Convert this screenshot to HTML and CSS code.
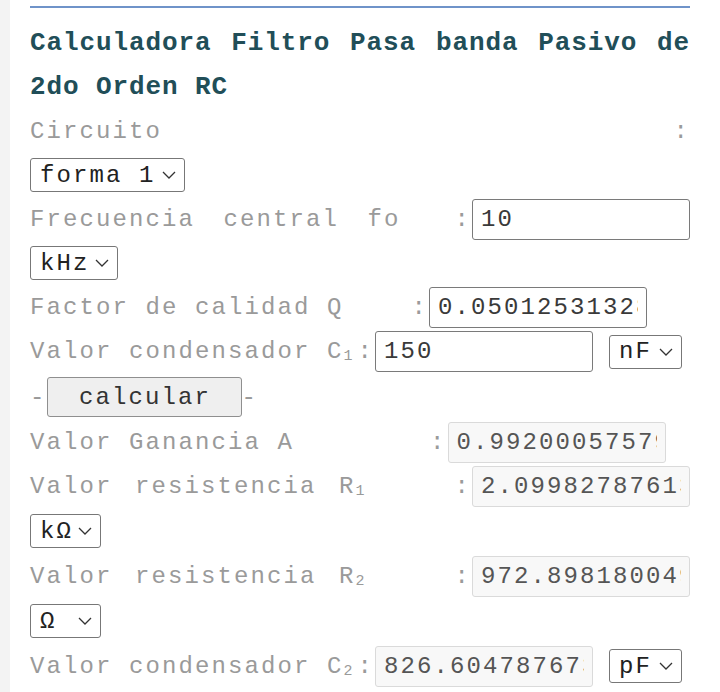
FILE: index.html
```html
<!DOCTYPE html>
<html lang="es">
<head>
<meta charset="utf-8">
<title>Calculadora Filtro Pasa banda Pasivo de 2do Orden RC</title>
<link rel="stylesheet" href="styles.css">
</head>
<body>
<div class="page">
  <form class="calc">
    <h1 class="title">Calculadora Filtro Pasa banda Pasivo de 2do Orden RC</h1>

    <div class="row"><span class="lbl">Circuito</span><span class="colon push">:</span></div>
    <div class="row">
      <select class="sel sel-forma"><option>forma 1</option><option>forma 2</option></select>
    </div>

    <div class="row">
      <span class="lbl spread-wide">Frecuencia central fo</span>
      <span class="field push"><span class="colon">:</span><input class="inp" type="text" value="10"></span>
    </div>
    <div class="row">
      <select class="sel sel-khz"><option>kHz</option><option>Hz</option><option>MHz</option></select>
    </div>

    <div class="row">
      <span class="lbl">Factor de calidad Q    </span>
      <span class="field nudge-q"><span class="colon">:</span><input class="inp" type="text" value="0.05012531328320802"></span>
    </div>

    <div class="row row-45">
      <span class="lbl">Valor condensador C<sub class="sub">1</sub></span>
      <span class="field"><span class="colon">:</span><input class="inp" type="text" value="150"></span>
      <select class="sel sel-unit"><option>nF</option><option>pF</option><option>µF</option></select>
    </div>

    <div class="row row-46">
      <span class="dash">-</span><button class="btn" type="button">calcular</button><span class="dash">-</span>
    </div>

    <div class="row">
      <span class="lbl">Valor Ganancia A        </span>
      <span class="field nudge-a"><span class="colon">:</span><input class="inp out" type="text" readonly value="0.9920005757906342"></span>
    </div>

    <div class="row">
      <span class="lbl spread">Valor resistencia R<sub class="sub">1</sub></span>
      <span class="field push"><span class="colon">:</span><input class="inp out" type="text" readonly value="2.0998278761357"></span>
    </div>
    <div class="row row-46">
      <select class="sel sel-ohm"><option>kΩ</option><option>Ω</option><option>MΩ</option></select>
    </div>

    <div class="row">
      <span class="lbl spread">Valor resistencia R<sub class="sub">2</sub></span>
      <span class="field push"><span class="colon">:</span><input class="inp out" type="text" readonly value="972.8981800493"></span>
    </div>
    <div class="row row-46">
      <select class="sel sel-ohm"><option>Ω</option><option>kΩ</option><option>MΩ</option></select>
    </div>

    <div class="row">
      <span class="lbl">Valor condensador C<sub class="sub">2</sub></span>
      <span class="field"><span class="colon">:</span><input class="inp out" type="text" readonly value="826.6047876731"></span>
      <select class="sel sel-unit"><option>pF</option><option>nF</option><option>µF</option></select>
    </div>
  </form>
</div>
</body>
</html>
```

FILE: styles.css
```css
html, body {
  margin: 0;
  padding: 0;
  background: #ffffff;
}

body {
  font-family: "Liberation Mono", "DejaVu Sans Mono", monospace;
}

.page {
  border-left: 10px solid #f3f3f3;
  min-height: 692px;
  padding: 6px 30px 0 20px;
  box-sizing: border-box;
}

.calc {
  width: 660px;
  border-top: 2px solid #6f93c9;
  padding-top: 13px;
}

.title {
  margin: 0;
  font-size: 26px;
  font-weight: bold;
  letter-spacing: 0.9px;
  line-height: 44px;
  color: #214e58;
  text-align: justify;
}

.row {
  display: flex;
  align-items: center;
  height: 44px;
  font-size: 24px;
  letter-spacing: 2.1px;
  color: #9a9a9a;
  white-space: pre;
}

.row-45 { height: 45px; }
.row-46 { height: 46px; }

.lbl { flex: none; }
.spread-wide { word-spacing: 12px; }
.spread { word-spacing: 6px; }

.sub {
  font-size: 15px;
  letter-spacing: 5px;
  vertical-align: -2px;
  line-height: 0;
}

.push { margin-left: auto; }

.field {
  display: flex;
  align-items: center;
  flex: none;
}

.nudge-q { margin-left: 2px; }
.nudge-a { margin-left: 4px; }

.colon { color: #9a9a9a; }

.inp {
  font: inherit;
  letter-spacing: 2.1px;
  color: #3a3a3a;
  width: 218px;
  height: 41px;
  box-sizing: border-box;
  border: 1px solid #7a7a7a;
  border-radius: 3px;
  padding: 0 8px;
  margin: 0 0 0 1px;
  background: #ffffff;
  outline: none;
}

.out {
  background: #f8f8f8;
  border-color: #dadada;
  color: #555555;
}

.sel {
  -webkit-appearance: none;
  appearance: none;
  font: inherit;
  letter-spacing: 2.1px;
  color: #222222;
  height: 34px;
  box-sizing: border-box;
  border: 1px solid #777777;
  border-radius: 3px;
  padding: 0 0 0 9px;
  margin: 0;
  background: #ffffff url("data:image/svg+xml,%3Csvg xmlns='http://www.w3.org/2000/svg' width='14' height='8' viewBox='0 0 14 8'%3E%3Cpath d='M1 1l6 6 6-6' fill='none' stroke='%23333' stroke-width='1.3'/%3E%3C/svg%3E") no-repeat right 8px center;
}

.sel-forma { width: 155px; }
.sel-khz { width: 88px; }
.sel-unit { width: 73px; margin-left: 16px; }
.sel-ohm { width: 71px; }

.dash { color: #999999; }

.btn {
  font: inherit;
  letter-spacing: 2.1px;
  color: #333333;
  width: 195px;
  height: 40px;
  box-sizing: border-box;
  border: 1px solid #8f8f8f;
  border-radius: 3px;
  background: #efefef;
  padding: 0 0 0 2px;
  margin: 0;
}
```
